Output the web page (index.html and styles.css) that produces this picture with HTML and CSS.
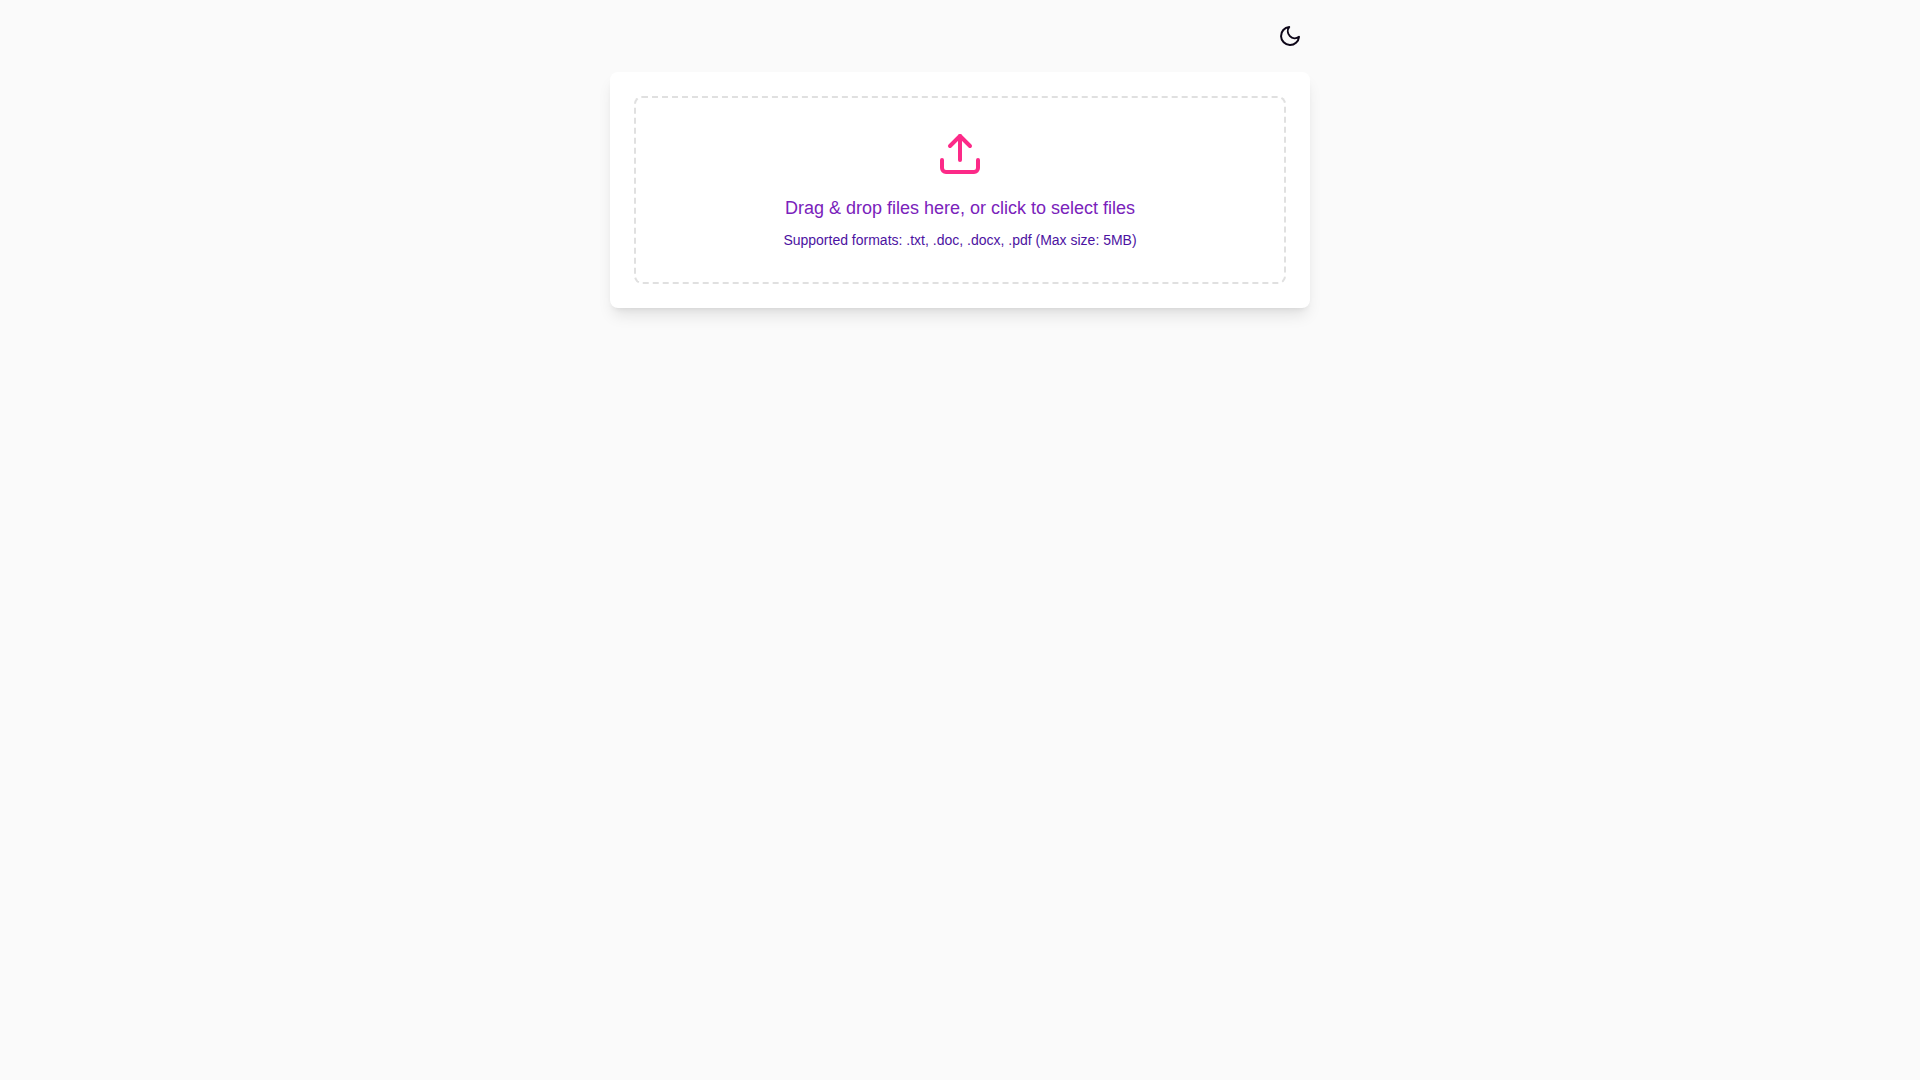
FILE: index.html
```html
<!DOCTYPE html>
<html lang="en">
  <head>
    <meta charset="UTF-8" />
    <meta name="viewport" content="width=device-width, initial-scale=1.0" />
    <title>File Upload</title>
    <link rel="stylesheet" href="styles.css">
  </head>
  <body>
    <main class="container">
      <header class="toolbar">
        <button class="theme-toggle" type="button" aria-label="Toggle dark mode">
          <svg width="24" height="24" viewBox="0 0 24 24" aria-hidden="true">
            <path d="M21 12.79A9 9 0 1 1 11.21 3 7 7 0 0 0 21 12.79z" />
          </svg>
        </button>
      </header>

      <section class="upload-card">
        <label class="dropzone" for="fileInput">
          <input id="fileInput" class="file-input" type="file" accept=".txt,.doc,.docx,.pdf" multiple />
          <svg class="upload-icon" width="48" height="48" viewBox="0 0 24 24" aria-hidden="true">
            <path d="M21 15v4a2 2 0 0 1-2 2H5a2 2 0 0 1-2-2v-4" />
            <polyline points="17 8 12 3 7 8" />
            <line x1="12" y1="3" x2="12" y2="15" />
          </svg>
          <span class="dropzone-text">Drag &amp; drop files here, or click to select files</span>
          <span class="dropzone-hint">Supported formats: .txt, .doc, .docx, .pdf (Max size: 5MB)</span>
        </label>
      </section>
    </main>
  </body>
</html>
```
FILE: styles.css
```css
* {
  margin: 0;
  padding: 0;
  box-sizing: border-box;
}
body {
  min-height: 100vh;
  font-family: "Liberation Sans", Arial, sans-serif;
  background: #fafafa;
  color: #0d0618;
}
svg {
  display: block;
  fill: none;
  stroke: currentColor;
  stroke-width: 2;
  stroke-linecap: round;
  stroke-linejoin: round;
}

.container {
  max-width: 732px;
  margin: 0 auto;
  padding: 16px;
}
.toolbar {
  display: flex;
  justify-content: flex-end;
  margin-bottom: 16px;
}
.theme-toggle {
  padding: 8px;
  border: none;
  border-radius: 50%;
  background: transparent;
  color: inherit;
  cursor: pointer;
}

/* Upload card */
.upload-card {
  padding: 24px;
  border-radius: 8px;
  background: #fff;
  box-shadow: 0 10px 15px -3px rgba(0, 0, 0, 0.1),
    0 4px 6px -4px rgba(0, 0, 0, 0.1);
}
.dropzone {
  display: flex;
  flex-direction: column;
  align-items: center;
  padding: 32px;
  border: 2px dashed #e0e0e0;
  border-radius: 8px;
  text-align: center;
  cursor: pointer;
}
.dropzone:hover,
.dropzone:focus-within {
  border-color: #fc2a88;
}
.file-input {
  position: absolute;
  width: 1px;
  height: 1px;
  opacity: 0;
}
.upload-icon {
  margin-bottom: 16px;
  color: #fc2a88;
}
.dropzone-text {
  margin-bottom: 8px;
  font-size: 18px;
  line-height: 28px;
  color: #7a22bb;
}
.dropzone-hint {
  font-size: 14px;
  line-height: 20px;
  color: #4c12a1;
}
```
